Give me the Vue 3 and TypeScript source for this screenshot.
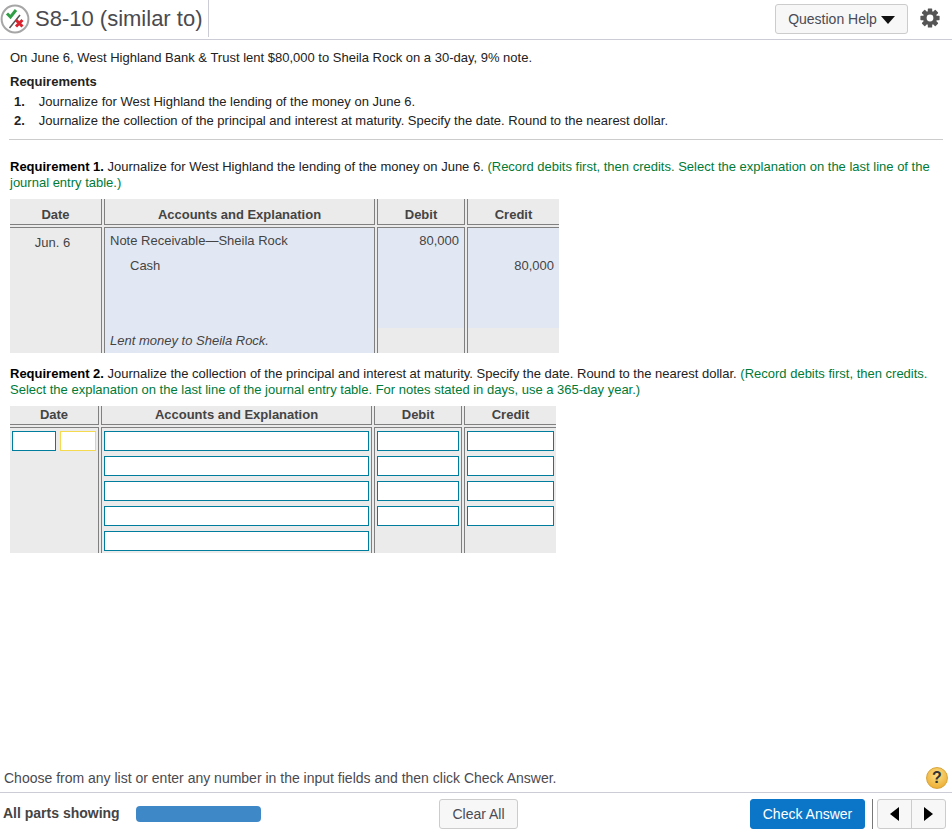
<template>
  <div class="page">
    <header class="top">
      <div class="title-box">
        <svg class="status" width="30" height="30" viewBox="0 0 30 30">
          <circle cx="15" cy="15" r="13.4" fill="#fff" stroke="#a6a6a6" stroke-width="2" />
          <path d="M7 9.5 10.5 13 16 6" fill="none" stroke="#2f9e44" stroke-width="3" />
          <path d="M9.5 24 20 11" fill="none" stroke="#555" stroke-width="1.5" />
          <path d="M16 16 22.5 22.5M22.5 16 16 22.5" fill="none" stroke="#d9232e" stroke-width="3" />
        </svg>
        <h1>S8-10 (similar to)</h1>
      </div>
      <div class="top-right">
        <button class="btn help-btn">Question Help <span class="caret"></span></button>
        <svg class="gear" width="20" height="20" viewBox="0 0 20 20">
          <rect v-for="a in teeth" :key="a" x="7.8" y="0.4" width="4.4" height="19.2" rx="0.6" fill="#555" :transform="`rotate(${a} 10 10)`" />
          <circle cx="10" cy="10" r="5.2" fill="none" stroke="#555" stroke-width="3.6" />
          <circle cx="10" cy="10" r="3.4" fill="#fff" />
        </svg>
      </div>
    </header>

    <main class="content">
      <p class="intro">On June 6, West Highland Bank &amp; Trust lent $80,000 to Sheila Rock on a 30-day, 9% note.</p>
      <h2 class="req-title">Requirements</h2>
      <ol class="req-list">
        <li v-for="(r, i) in requirements" :key="i"><b>{{ i + 1 }}.</b><span>{{ r }}</span></li>
      </ol>
      <hr class="rule" />

      <p class="req-text req-one">
        <b>Requirement 1.</b> Journalize for West Highland the lending of the money on June 6.
        <span class="hint">(Record debits first, then credits. Select the explanation on the last line of the journal entry table.)</span>
      </p>
      <div class="journal answered">
        <div class="th">Date</div>
        <div class="th">Accounts and Explanation</div>
        <div class="th">Debit</div>
        <div class="th">Credit</div>
        <div class="td date-col"><div class="line center">Jun. 6</div></div>
        <div class="td blue">
          <div class="line">Note Receivable—Sheila Rock</div>
          <div class="line indent">Cash</div>
          <div class="line"></div>
          <div class="line"></div>
          <div class="line explain">Lent money to Sheila Rock.</div>
        </div>
        <div class="td">
          <div class="fill"><div class="line num">80,000</div></div>
        </div>
        <div class="td">
          <div class="fill"><div class="line"></div><div class="line num">80,000</div></div>
        </div>
      </div>

      <p class="req-text req-two">
        <b>Requirement 2.</b> Journalize the collection of the principal and interest at maturity. Specify the date. Round to the nearest dollar.
        <span class="hint">(Record debits first, then credits. Select the explanation on the last line of the journal entry table. For notes stated in days, use a 365-day year.)</span>
      </p>
      <div class="journal entry">
        <div class="th">Date</div>
        <div class="th">Accounts and Explanation</div>
        <div class="th">Debit</div>
        <div class="th">Credit</div>
        <div class="td date-col">
          <div class="date-inputs">
            <input class="inp month" type="text" />
            <input class="inp day" type="text" />
          </div>
        </div>
        <div class="td inputs acct"><input v-for="n in 5" :key="n" class="inp" type="text" /></div>
        <div class="td inputs debit"><input v-for="n in 4" :key="n" class="inp" type="text" /></div>
        <div class="td inputs credit"><input v-for="n in 4" :key="n" class="inp" type="text" /></div>
      </div>
    </main>

    <div class="instruction">
      <span>Choose from any list or enter any number in the input fields and then click Check Answer.</span>
      <span class="q-ball">?</span>
    </div>
    <footer class="bottom">
      <b class="parts">All parts showing</b>
      <div class="progress"></div>
      <button class="btn clear">Clear All</button>
      <button class="btn check">Check Answer</button>
      <span class="sep"></span>
      <div class="nav">
        <button class="nav-btn"><span class="arrow left"></span></button>
        <button class="nav-btn"><span class="arrow right"></span></button>
      </div>
    </footer>
  </div>
</template>

<script setup lang="ts">
const teeth: number[] = [0, 45, 90, 135]

const requirements: string[] = [
  'Journalize for West Highland the lending of the money on June 6.',
  'Journalize the collection of the principal and interest at maturity. Specify the date. Round to the nearest dollar.'
]
</script>

<style>
html, body {
  margin: 0;
  background: #fff;
}
</style>

<style scoped>
.page {
  width: 952px;
  height: 834px;
  display: flex;
  flex-direction: column;
  overflow: hidden;
  font-family: "Liberation Sans", Arial, sans-serif;
  font-size: 13px;
  line-height: 16px;
  color: #1a1a1a;
}

/* header */
.top {
  height: 39px;
  flex: none;
  display: flex;
  justify-content: space-between;
  border-bottom: 1px solid #ccccd6;
}
.title-box {
  width: 208px;
  height: 37px;
  display: flex;
  align-items: center;
  gap: 5px;
  border-right: 1px solid #ccccd6;
}
.status {
  flex: none;
  margin-top: 1px;
}
h1 {
  margin: 0;
  font-size: 22px;
  font-weight: 400;
  color: #4a4a4f;
  white-space: nowrap;
}
.top-right {
  display: flex;
  align-items: flex-start;
  padding: 4px 12px 0 0;
  gap: 12px;
}
.btn {
  font-family: inherit;
  box-sizing: border-box;
  border: 1px solid #ccc;
  border-radius: 3px;
  background: #f7f7f7;
  color: #4a4a55;
  padding: 0;
}
.help-btn {
  width: 133px;
  height: 30px;
  font-size: 14px;
  display: flex;
  align-items: center;
  justify-content: center;
  gap: 4px;
}
.caret {
  width: 0;
  height: 0;
  border-left: 7px solid transparent;
  border-right: 7px solid transparent;
  border-top: 8px solid #111;
  margin-top: 2px;
}
.gear {
  margin-top: 4px;
}

/* question */
.content {
  flex: 1;
  padding: 10px 9px 0 10px;
}
p, h2 {
  margin: 0;
}
.intro {
  color: #222;
}
.req-title {
  margin-top: 8px;
  font-size: 13px;
  color: #222;
}
.req-list {
  list-style: none;
  margin: 4px 0 0;
  padding: 0 0 0 4px;
  display: flex;
  flex-direction: column;
  gap: 3px;
}
.req-list li {
  display: flex;
  gap: 14px;
  color: #222;
}
.rule {
  margin: 10px 0 0 -1px;
  border: 0;
  border-top: 1px solid #ccc;
}
.req-text {
  color: #222;
}
.req-text b {
  color: #000;
}
.req-one {
  margin-top: 19px;
}
.req-two {
  margin-top: 13px;
}
.hint {
  color: #007a37;
}

/* journal tables */
.journal {
  display: grid;
  gap: 2px;
  background: #ebebeb;
  color: #444;
}
.answered {
  width: 549px;
  margin-top: 8px;
  grid-template-columns: 92px 271px 88px 92px;
  grid-template-rows: 26px 126px;
}
.entry {
  width: 546px;
  margin-top: 8px;
  grid-template-columns: 89px 271px 88px 92px;
  grid-template-rows: 19px 126px;
}
.th {
  font-weight: 700;
  text-align: center;
  box-sizing: border-box;
  border-bottom: 1px solid #808080;
  border-right: 1px solid #808080;
  padding-top: 8px;
}
.entry .th {
  padding-top: 1px;
}
.th:nth-child(n + 2) {
  border-left: 1px solid #808080;
}
.th:nth-child(4) {
  border-right: 0;
}
.td {
  box-sizing: border-box;
  border-top: 1px solid #808080;
  border-left: 1px solid #808080;
  border-right: 1px solid #808080;
}
.td.date-col {
  border-left: 0;
}
.td:nth-child(8) {
  border-right: 0;
}
.blue {
  background: #e2e8f3;
}
.fill {
  height: 100px;
  background: #e2e8f3;
}
.line {
  height: 25px;
  line-height: 25px;
  padding-left: 5px;
}
.center {
  text-align: center;
  padding: 2px 6px 0 0;
  height: 23px;
}
.indent {
  padding-left: 25px;
}
.num {
  text-align: right;
  padding: 0 5px 0 0;
}
.explain {
  font-style: italic;
}
.inp {
  display: block;
  box-sizing: border-box;
  height: 20px;
  border: 1px solid #007d9c;
  background: #fff;
  border-radius: 0;
  padding: 0;
  margin: 0;
  outline: 0;
}
.date-inputs {
  display: flex;
  gap: 4px;
  padding: 3px 0 0 2px;
}
.month {
  width: 44px;
}
.day {
  width: 36px;
  border-color: #f5d94e;
}
.inputs {
  display: flex;
  flex-direction: column;
  gap: 5px;
  padding-top: 3px;
}
.acct {
  padding-left: 2px;
}
.acct .inp {
  width: 265px;
}
.debit {
  padding-left: 2px;
}
.debit .inp {
  width: 82px;
}
.credit {
  padding-left: 2px;
}
.credit .inp {
  width: 87px;
}

/* footer */
.instruction {
  flex: none;
  height: 33px;
  box-sizing: border-box;
  display: flex;
  align-items: center;
  justify-content: space-between;
  padding: 4px 4px 0 4px;
  border-bottom: 1px solid #ccccd6;
  font-size: 14px;
  color: #4a4a4f;
}
.q-ball {
  width: 22px;
  height: 22px;
  border-radius: 50%;
  background: radial-gradient(circle at 50% 35%, #fbe08a, #eeb23a 75%, #c98f25);
  border: 1px solid #d9a53a;
  box-sizing: border-box;
  color: #333;
  font-weight: 700;
  font-size: 16px;
  line-height: 20px;
  text-align: center;
}
.bottom {
  flex: none;
  height: 41px;
  box-sizing: border-box;
  display: flex;
  align-items: center;
  padding: 1px 6px 0 3px;
}
.parts {
  width: 133px;
  padding-bottom: 2px;
  font-size: 14px;
  color: #444;
}
.progress {
  width: 125px;
  height: 16px;
  border-radius: 4px;
  background: #3f88c8;
}
.clear {
  width: 79px;
  height: 30px;
  margin-left: 178px;
  font-size: 14px;
}
.check {
  width: 115px;
  height: 30px;
  margin-left: 232px;
  background: #0b76c8;
  border-color: #0b76c8;
  color: #fff;
  font-size: 14px;
}
.sep {
  width: 1px;
  height: 30px;
  margin-left: 7px;
  background: #777;
}
.nav {
  display: flex;
  margin-left: 4px;
  width: 69px;
  height: 30px;
  box-sizing: border-box;
  border: 1px solid #ccc;
  border-radius: 3px;
  background: #f7f7f7;
}
.nav-btn {
  flex: 1;
  border: 0;
  background: none;
  padding: 0;
  display: flex;
  align-items: center;
  justify-content: center;
}
.nav-btn + .nav-btn {
  border-left: 1px solid #ccc;
}
.arrow {
  width: 0;
  height: 0;
  border-top: 7px solid transparent;
  border-bottom: 7px solid transparent;
}
.arrow.left {
  border-right: 9px solid #000;
}
.arrow.right {
  border-left: 9px solid #000;
}
</style>
